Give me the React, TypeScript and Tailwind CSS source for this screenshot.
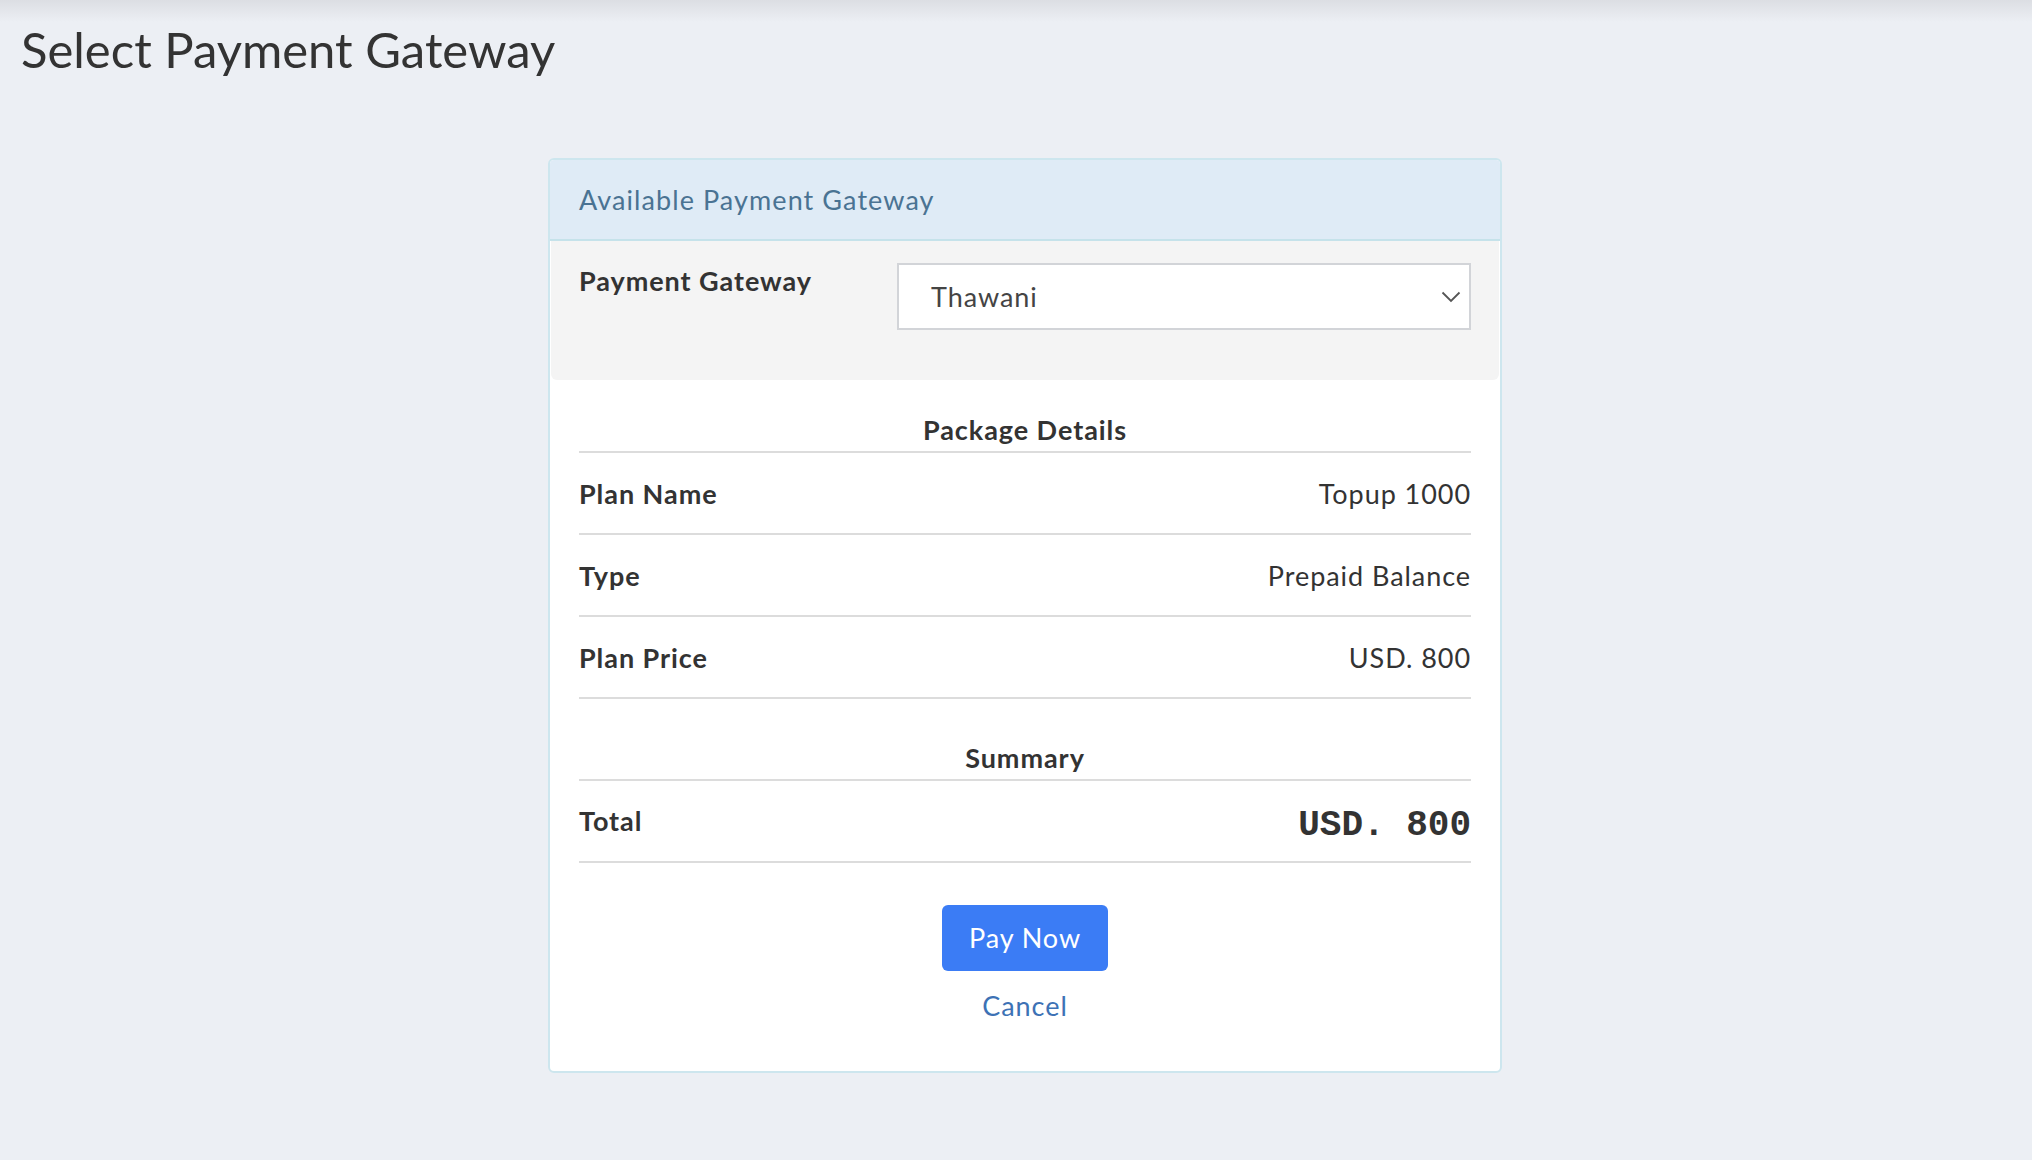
const rows = [
  { label: "Plan Name", value: "Topup 1000" },
  { label: "Type", value: "Prepaid Balance" },
  { label: "Plan Price", value: "USD. 800" },
];

export default function App() {
  return (
    <div className="min-h-screen bg-[#eceff4] bg-[linear-gradient(to_bottom,#dcdee3_0px,#eceff4_22px)] font-['Lato',sans-serif] text-[#333]">
      <h1 className="px-[21px] pt-[18px] text-[49px] leading-[62px] font-normal text-[#333]">
        Select Payment Gateway
      </h1>

      <div className="mt-[78px] flex justify-center pl-[18px]">
        <div className="w-[954px] overflow-hidden rounded-[6px] border-2 border-[#cde6ee] bg-white text-[27px] leading-[36px] tracking-[0.035em]">
          {/* header */}
          <div className="flex h-[81px] items-center border-b-2 border-[#c5e2ea] bg-[#dfebf6] px-[29px]">
            <span className="text-[#4a7393] tracking-[0.04em]">Available Payment Gateway</span>
          </div>

          {/* gateway select */}
          <div className="mx-[1px] flex h-[139px] items-start rounded-b-[6px] bg-[#f4f4f4] px-[28px] pt-[22px]">
            <label className="w-[318px] font-bold text-[#333]">Payment Gateway</label>
            <div className="flex h-[67px] flex-1 items-center justify-between border-2 border-[#d2d4d8] bg-white pl-[32px] pr-[8px]">
              <span className="text-[#444]">Thawani</span>
              <svg width="20" height="12" viewBox="0 0 20 12" fill="none" className="text-[#555]">
                <polyline points="1.5,1.5 10,10 18.5,1.5" stroke="currentColor" strokeWidth="1.8" />
              </svg>
            </div>
          </div>

          <div className="px-[29px] pt-[32px] pb-[47px]">
            {/* package details */}
            <div className="border-b-2 border-[#dcdcdc] pb-[3px] text-center font-bold">Package Details</div>
            {rows.map((r) => (
              <div key={r.label} className="flex h-[82px] items-center justify-between border-b-2 border-[#dcdcdc] pt-[2px]">
                <span className="font-bold">{r.label}</span>
                <span>{r.value}</span>
              </div>
            ))}

            {/* summary */}
            <div className="mt-[41px] border-b-2 border-[#dcdcdc] pb-[3px] text-center font-bold">Summary</div>
            <div className="flex h-[82px] items-center justify-between border-b-2 border-[#dcdcdc]">
              <span className="font-bold">Total</span>
              <span className="pt-[10px] font-['Liberation_Mono',monospace] text-[36px] font-bold tracking-normal text-[#333]">USD. 800</span>
            </div>

            <div className="mt-[42px] flex flex-col items-center">
              <button className="h-[66px] w-[166px] rounded-[6px] bg-[#3b7cf5] text-white">Pay Now</button>
              <a className="mt-[17px] text-[#3d72b5]">Cancel</a>
            </div>
          </div>
        </div>
      </div>
    </div>
  );
}
